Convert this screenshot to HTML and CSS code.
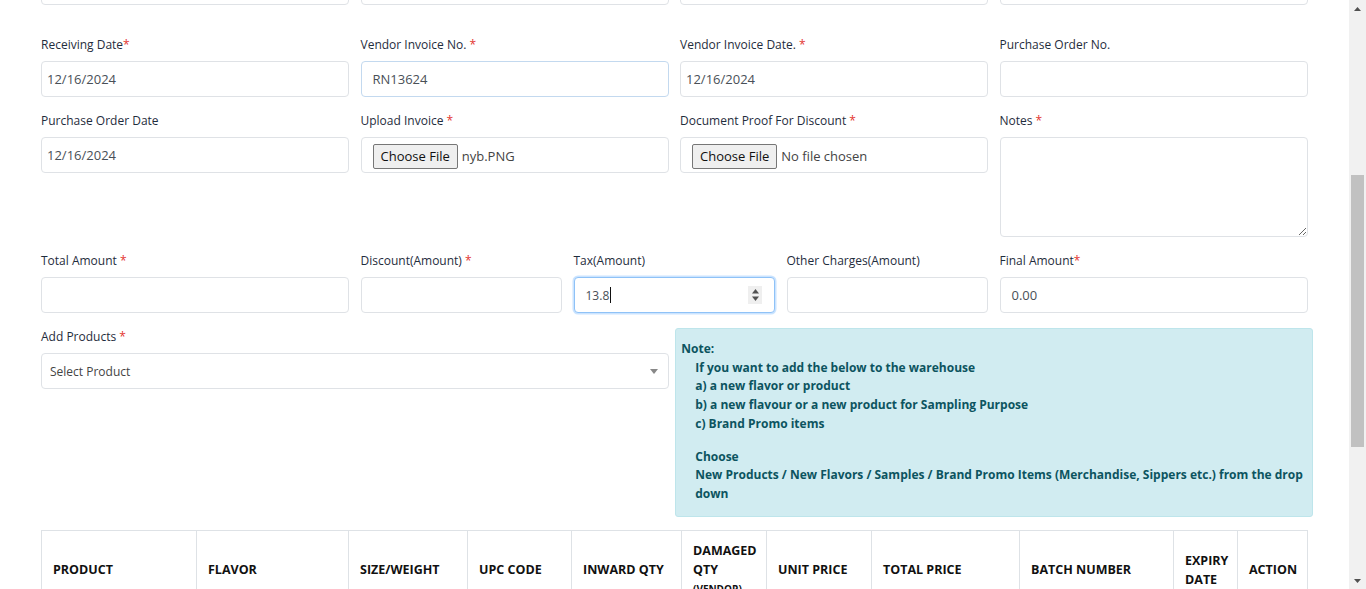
FILE: index.html
```html
<!DOCTYPE html>
<html>
<head>
<meta charset="utf-8">
<link rel="stylesheet" href="styles.css">
</head>
<body>
<div class="page">
  <div class="content">
    <div class="row row-cut">
      <div class="col c3"><div class="input"></div></div>
      <div class="col c3"><div class="input"></div></div>
      <div class="col c3"><div class="input"></div></div>
      <div class="col c3"><div class="input"></div></div>
    </div>

    <div class="row first">
      <div class="col c3">
        <label class="lbl">Receiving Date<span class="req">*</span></label>
        <div class="input">12/16/2024</div>
      </div>
      <div class="col c3">
        <label class="lbl">Vendor Invoice No. <span class="req">*</span></label>
        <div class="input soft-focus pad-lg">RN13624</div>
      </div>
      <div class="col c3">
        <label class="lbl">Vendor Invoice Date. <span class="req">*</span></label>
        <div class="input">12/16/2024</div>
      </div>
      <div class="col c3">
        <label class="lbl">Purchase Order No.</label>
        <div class="input"></div>
      </div>
    </div>

    <div class="row">
      <div class="col c3">
        <label class="lbl">Purchase Order Date</label>
        <div class="input">12/16/2024</div>
      </div>
      <div class="col c3">
        <label class="lbl">Upload Invoice <span class="req">*</span></label>
        <div class="input file"><span class="filebtn">Choose File</span><span class="fname">nyb.PNG</span></div>
      </div>
      <div class="col c3">
        <label class="lbl">Document Proof For Discount <span class="req">*</span></label>
        <div class="input file"><span class="filebtn">Choose File</span><span class="fname">No file chosen</span></div>
      </div>
      <div class="col c3">
        <label class="lbl">Notes <span class="req">*</span></label>
        <textarea class="textarea"></textarea>
      </div>
    </div>

    <div class="row">
      <div class="col c3">
        <label class="lbl">Total Amount <span class="req">*</span></label>
        <div class="input"></div>
      </div>
      <div class="col c2">
        <label class="lbl">Discount(Amount) <span class="req">*</span></label>
        <div class="input"></div>
      </div>
      <div class="col c2">
        <label class="lbl">Tax(Amount)</label>
        <div class="input focus number"><span class="numval">13.8</span><span class="caret"></span><span class="spin"><svg width="9" height="14" viewBox="0 0 9 14"><path d="M4.5 1 L8 5.5 L1 5.5 Z" fill="#505050"/><path d="M4.5 13 L8 8.5 L1 8.5 Z" fill="#505050"/></svg></span></div>
      </div>
      <div class="col c2">
        <label class="lbl">Other Charges(Amount)</label>
        <div class="input"></div>
      </div>
      <div class="col c3">
        <label class="lbl">Final Amount<span class="req">*</span></label>
        <div class="input pad-lg">0.00</div>
      </div>
    </div>

    <div class="row">
      <div class="col c6">
        <label class="lbl">Add Products <span class="req">*</span></label>
        <div class="input select"><span>Select Product</span><span class="arrow"></span></div>
      </div>
      <div class="col c6 nopad">
        <div class="note">
          <div>Note:</div>
          <div class="indent">
            <div>If you want to add the below to the warehouse</div>
            <div>a) a new flavor or product</div>
            <div>b) a new flavour or a new product for Sampling Purpose</div>
            <div>c) Brand Promo items</div>
            <div class="gap">Choose</div>
            <div>New Products / New Flavors / Samples / Brand Promo Items (Merchandise, Sippers etc.) from the drop down</div>
          </div>
        </div>
      </div>
    </div>

    <div class="tablewrap">
      <table class="tbl">
        <colgroup>
          <col style="width:155px"><col style="width:152px"><col style="width:119px"><col style="width:104px"><col style="width:110px"><col style="width:85px"><col style="width:105px"><col style="width:148px"><col style="width:154px"><col style="width:64px"><col style="width:70px">
        </colgroup>
        <thead>
          <tr>
            <th>PRODUCT</th>
            <th>FLAVOR</th>
            <th>SIZE/WEIGHT</th>
            <th>UPC CODE</th>
            <th>INWARD QTY</th>
            <th>DAMAGED QTY <span class="small">(VENDOR)</span></th>
            <th>UNIT PRICE</th>
            <th>TOTAL PRICE</th>
            <th>BATCH NUMBER</th>
            <th>EXPIRY DATE</th>
            <th>ACTION</th>
          </tr>
        </thead>
      </table>
    </div>
  </div>
  <div class="scrollbar">
    <div class="sb-btn"><svg width="7" height="4" viewBox="0 0 7 4"><path d="M3.5 0 L7 4 L0 4 Z" fill="#505050"/></svg></div>
    <div class="sb-track">
      <div class="sb-thumb"></div>
    </div>
    <div class="sb-btn"><svg width="7" height="4" viewBox="0 0 7 4"><path d="M3.5 4 L7 0 L0 0 Z" fill="#505050"/></svg></div>
  </div>
</div>
</body>
</html>
```

FILE: styles.css
```css
* { box-sizing: border-box; }
html, body { margin: 0; padding: 0; background: #fff; }
body {
  font-family: "Open Sans", "Noto Sans", sans-serif;
  font-size: 12px;
  color: #212529;
  overflow: hidden;
}
.page {
  display: flex;
  width: 1366px;
  height: 589px;
  overflow: hidden;
}
.content {
  width: 1349px;
  padding-left: 35.25px;
  overflow: hidden;
}
.row {
  display: flex;
  width: 1278px;
  align-items: flex-start;
}
.row-cut { margin-top: -31px; }
.first { margin-top: 31px; }
.col { padding: 0 5.75px; }
.c3 { width: 319.5px; }
.c2 { width: 213px; }
.c6 { width: 639px; }
.nopad { padding: 0; }
.lbl {
  display: block;
  height: 16px;
  line-height: 18px;
  margin-bottom: 9px;
  color: #1f2d3d;
  font-size: 12px;
  white-space: nowrap;
}
.req { color: #e3342f; }
.input {
  height: 36px;
  border: 1px solid #dfe2e6;
  border-radius: 4px;
  background: #fff;
  margin-bottom: 15px;
  display: flex;
  align-items: center;
  padding: 0 5px;
  font-size: 13px;
  color: #495057;
}
.row-cut .input { margin-bottom: 0; }
.pad-lg { padding-left: 11px; }
.soft-focus {
  border-color: #c3d9ef;
}
.focus {
  border-color: #8fc2f7;
  box-shadow: 0 0 0 1.5px rgba(160, 205, 255, 0.55);
}
.file { padding-left: 11px; }
.filebtn {
  display: inline-flex;
  align-items: center;
  height: 25px;
  padding: 0 7px;
  background: #efefef;
  border: 1px solid #767676;
  border-radius: 2px;
  color: #101010;
  font-size: 13px;
  margin-right: 4px;
  margin-top: 2px;
}
.fname { color: #444; font-size: 13px; margin-top: 2px; }
.textarea {
  display: block;
  width: 100%;
  height: 100px;
  border: 1px solid #dfe2e6;
  border-radius: 4px;
  margin: 0 0 15px 0;
  font-family: inherit;
  resize: vertical;
}
.number { padding-left: 11px; }
.numval { font-size: 12px; color: #495057; }
.caret {
  display: inline-block;
  width: 1px;
  height: 16px;
  background: #111;
  margin-left: 1px;
}
.spin {
  margin-left: auto;
  margin-right: 7px;
  width: 14px;
  height: 18px;
  background: #efefef;
  display: flex;
  align-items: center;
  justify-content: center;
}
.select {
  justify-content: space-between;
  padding: 0 10px 0 8px;
  color: #444;
  font-size: 12px;
}
.arrow {
  width: 0;
  height: 0;
  border-left: 4px solid transparent;
  border-right: 4px solid transparent;
  border-top: 5px solid #888;
}
.note {
  background: #d1ecf1;
  border: 1px solid #bee5eb;
  border-radius: 3px;
  color: #0c5460;
  font-weight: 700;
  font-size: 12px;
  line-height: 18.7px;
  padding: 11px 8px 12px 5px;
  margin-left: 1px;
}
.indent { padding-left: 14px; }
.gap { margin-top: 14px; }
.tablewrap { margin-top: 13px; }
.tbl {
  border-collapse: collapse;
  table-layout: fixed;
  width: 1266px;
  margin-left: 5.75px;
}
.tbl th {
  border: 1px solid #dee2e6;
  text-align: left;
  vertical-align: middle;
  font-size: 12.5px;
  font-weight: 700;
  color: #111;
  line-height: 19px;
  padding: 10px 11px;
}
.small { font-size: 10px; display: inline-block; }
.scrollbar {
  width: 17px;
  height: 589px;
  background: #f1f1f1;
  display: flex;
  flex-direction: column;
}
.sb-btn {
  height: 17px;
  display: flex;
  align-items: center;
  justify-content: center;
}
.sb-track {
  flex: 1;
  padding: 158px 2px 0 2px;
}
.sb-thumb {
  height: 272px;
  background: #c1c1c1;
}
```
